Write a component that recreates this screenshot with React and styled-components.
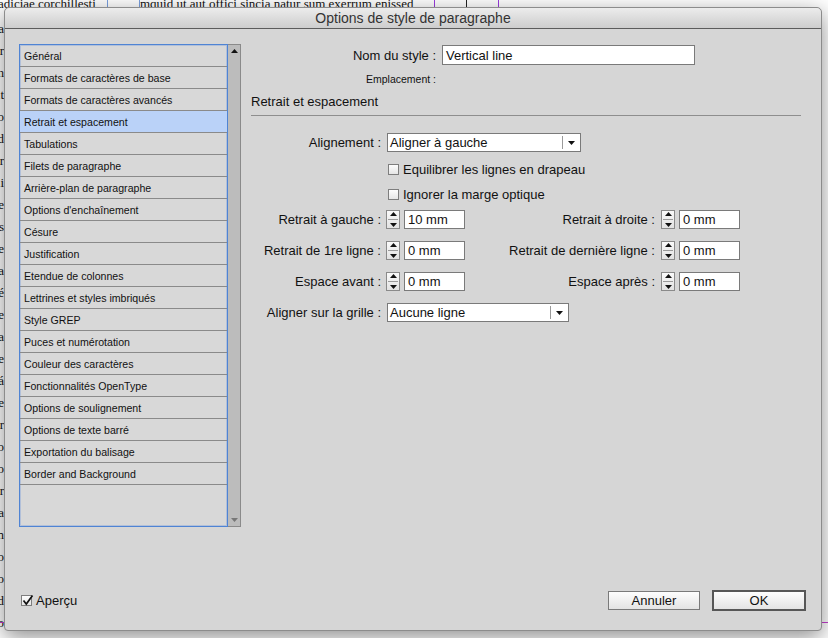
import React from 'react';
import styled, { createGlobalStyle } from 'styled-components';

const Global = createGlobalStyle`
    body {
        margin: 0;
        background: #fff;
    }
`;

const Desktop = styled.div`
    position: relative;
    width: 828px;
    height: 638px;
    overflow: hidden;
    background: #fff;
    font-family: "Liberation Serif", serif;
`;

const DocLine = styled.div`
    position: absolute;
    top: ${p => p.top}px;
    left: ${p => p.left}px;
    font-size: 13px;
    line-height: 14px;
    color: #111;
    white-space: nowrap;
`;

const DocColumn = styled.div`
    position: absolute;
    top: 18px;
    left: -38px;
    width: 42px;
    font-size: 13px;
    line-height: 22px;
    color: #111;
    text-align: right;
`;

const Guide = styled.div`
    position: absolute;
    left: ${p => p.x}px;
    top: 0;
    width: 1px;
    height: 14px;
    background: ${p => p.color};
`;

const HGuide = styled.div`
    position: absolute;
    left: 0;
    right: 0;
    top: 622px;
    height: 1px;
    background: #c43ccf;
`;

const Dialog = styled.div`
    position: absolute;
    left: 4px;
    top: 7px;
    width: 816px;
    height: 622px;
    display: flex;
    flex-direction: column;
    background: #d6d6d6;
    border: 1px solid #8c8c8c;
    border-radius: 5px 5px 4px 4px;
    box-shadow: 0 6px 22px rgba(0, 0, 0, 0.45);
    font-family: "Liberation Sans", Arial, sans-serif;
    color: #111;
`;

const TitleBar = styled.div`
    height: 20px;
    display: flex;
    align-items: center;
    justify-content: center;
    background: linear-gradient(#ececec, #cdcdcd);
    border-bottom: 1px solid #5c5c5c;
    border-radius: 5px 5px 0 0;
    font-size: 14px;
    color: #333;
`;

const Body = styled.div`
    flex: 1;
    display: flex;
    gap: 10px;
    padding: 15px 20px 0 14px;
`;

const ListBox = styled.div`
    width: 222px;
    height: 483px;
    display: flex;
    box-sizing: border-box;
`;

const Items = styled.div`
    flex: 1;
    border: 1px solid #4f84d4;
    box-shadow: inset 0 0 0 1px rgba(110, 150, 220, 0.35);
    background: #d8d8d8;
`;

const Item = styled.div`
    height: 21px;
    border-bottom: 1px solid #8a8a8a;
    padding-left: 4px;
    display: flex;
    align-items: center;
    font-size: 10.6px;
    background: ${p => (p.selected ? '#bad2f8' : 'transparent')};
`;

const Scrollbar = styled.div`
    width: 12px;
    background: #bcbcbc;
    border: 1px solid #8a8a8a;
    border-left: none;
    display: flex;
    flex-direction: column;
    justify-content: space-between;
    align-items: center;
    padding: 4px 0;
`;

const Panel = styled.div`
    flex: 1;
    display: flex;
    flex-direction: column;
`;

const Row = styled.div`
    display: flex;
    align-items: center;
    height: ${p => p.h || 19}px;
    margin-top: ${p => p.mt || 0}px;
    padding-left: ${p => p.pl || 0}px;
`;

const Label = styled.div`
    width: ${p => p.w}px;
    margin-right: ${p => (p.mr === undefined ? 6 : p.mr)}px;
    text-align: right;
    font-size: ${p => p.size || 13}px;
    white-space: nowrap;
`;

const TextInput = styled.div`
    width: ${p => p.w}px;
    height: ${p => p.h || 19}px;
    box-sizing: border-box;
    background: #fff;
    border: 1px solid #7a7a7a;
    padding-left: 3px;
    display: flex;
    align-items: center;
    font-size: 13px;
`;

const Select = styled.div`
    width: ${p => p.w}px;
    height: 19px;
    box-sizing: border-box;
    background: #fff;
    border: 1px solid #7a7a7a;
    display: flex;
    align-items: stretch;
    font-size: 13px;
`;

const SelectText = styled.div`
    flex: 1;
    padding-left: 2px;
    display: flex;
    align-items: center;
`;

const SelectArrow = styled.div`
    width: 17px;
    border-left: 1px solid #9a9a9a;
    margin: 2px 0;
    display: flex;
    align-items: center;
    justify-content: center;
`;

const SectionTitle = styled.div`
    height: 14px;
    margin-top: 9px;
    font-size: 13px;
    display: flex;
    align-items: center;
`;

const Rule = styled.div`
    height: 1px;
    margin-top: 7px;
    background: #8e8e8e;
`;

const Box = styled.div`
    width: 11px;
    height: 11px;
    box-sizing: border-box;
    border: 1px solid #7e7e7e;
    background: linear-gradient(#fdfdfd, #e6e6e6);
    margin-right: 4px;
    display: flex;
    align-items: center;
    justify-content: center;
    position: relative;
`;

const CheckText = styled.div`
    font-size: 13px;
`;

const Spin = styled.div`
    width: 14px;
    height: 19px;
    box-sizing: border-box;
    border: 1px solid #8a8a8a;
    background: linear-gradient(#fafafa, #e2e2e2);
    margin-right: 4px;
    display: flex;
    flex-direction: column;
    align-items: center;
    justify-content: space-around;
`;

const SpinLine = styled.div`
    width: 10px;
    height: 1px;
    background: #9a9a9a;
`;

const Footer = styled.div`
    height: 21px;
    margin: 0 15px 19px 16px;
    display: flex;
    align-items: center;
`;

const Buttons = styled.div`
    margin-left: auto;
    display: flex;
    align-items: center;
    gap: 12px;
`;

const Button = styled.div`
    width: ${p => (p.primary ? 94 : 92)}px;
    height: ${p => (p.primary ? 21 : 19)}px;
    box-sizing: border-box;
    border: ${p => (p.primary ? '2px solid #575757' : '1px solid #7a7a7a')};
    background: linear-gradient(#fdfdfd, #e4e4e4);
    display: flex;
    align-items: center;
    justify-content: center;
    font-size: 13px;
`;

const Tri = ({ down, color = '#111' }) => (
    <svg width="7" height="4" viewBox="0 0 7 4">
        <polygon points={down ? '0,0 7,0 3.5,4' : '0,4 7,4 3.5,0'} fill={color} />
    </svg>
);

const Spinner = () => (
    <Spin>
        <Tri />
        <SpinLine />
        <Tri down />
    </Spin>
);

const Check = ({ checked }) => (
    <Box>
        {checked && (
            <svg width="12" height="12" viewBox="0 0 12 12" style={{ position: 'absolute', left: 0, top: -2 }}>
                <path d="M1.5 6.5 L4.3 10 L10.5 1.5" stroke="#111" strokeWidth="1.7" fill="none" />
            </svg>
        )}
    </Box>
);

const sections = [
    'Général',
    'Formats de caractères de base',
    'Formats de caractères avancés',
    'Retrait et espacement',
    'Tabulations',
    'Filets de paragraphe',
    'Arrière-plan de paragraphe',
    "Options d'enchaînement",
    'Césure',
    'Justification',
    'Etendue de colonnes',
    'Lettrines et styles imbriqués',
    'Style GREP',
    'Puces et numérotation',
    'Couleur des caractères',
    'Fonctionnalités OpenType',
    'Options de soulignement',
    'Options de texte barré',
    'Exportation du balisage',
    'Border and Background',
];

const leftWords = ['ca', 'tur', 'num', 'olit', 'ato', 'aed', 'cor', 'mi', 'tae', 'es', 'de', 'ta', 'ré', 'fue', 'rua', 'ile', 'elá', 'lse', 'ir', 'ao', 'to', 'ar', 'ta', 'an', 'no', 'io', 'ud', 'io', 'ex', 'on', 'od', 'ur', 'ec'];

const Field = ({ label, value, w, mr }) => (
    <>
        <Label w={w} mr={mr}>{label}</Label>
        <Spinner />
        <TextInput w={61}>{value}</TextInput>
    </>
);

export default function App() {
    return (
        <Desktop>
            <Global />
            <DocLine top={-3} left={-2}>adiciae corchillesti</DocLine>
            <DocLine top={-3} left={140}>mquid ut aut offici sincia natur sum exerrum enissed</DocLine>
            <Guide x={107} color="#7aa0e0" />
            <Guide x={139} color="#7aa0e0" />
            <Guide x={434} color="#9a3ce0" />
            <Guide x={466} color="#222" />
            <Guide x={498} color="#9a3ce0" />
            <DocColumn>
                {leftWords.map((w, i) => <div key={i}>{w}</div>)}
            </DocColumn>
            <HGuide />

            <Dialog>
                <TitleBar>Options de style de paragraphe</TitleBar>
                <Body>
                    <ListBox>
                        <Items>
                            {sections.map((s, i) => (
                                <Item key={s} selected={i === 3}>{s}</Item>
                            ))}
                        </Items>
                        <Scrollbar>
                            <Tri />
                            <Tri down color="#777" />
                        </Scrollbar>
                    </ListBox>

                    <Panel>
                        <Row h={20} mt={1}>
                            <Label w={185}>Nom du style :</Label>
                            <TextInput w={253} h={20}>Vertical line</TextInput>
                        </Row>
                        <Row h={12} mt={8}>
                            <Label w={185} size={10.5}>Emplacement :</Label>
                        </Row>
                        <SectionTitle>Retrait et espacement</SectionTitle>
                        <Rule />

                        <Row mt={17}>
                            <Label w={130}>Alignement :</Label>
                            <Select w={194}>
                                <SelectText>Aligner à gauche</SelectText>
                                <SelectArrow><Tri down /></SelectArrow>
                            </Select>
                        </Row>
                        <Row h={16} mt={9} pl={137}>
                            <Check />
                            <CheckText>Equilibrer les lignes en drapeau</CheckText>
                        </Row>
                        <Row h={16} mt={9} pl={137}>
                            <Check />
                            <CheckText>Ignorer la marge optique</CheckText>
                        </Row>

                        <Row mt={8}>
                            <Field label="Retrait à gauche :" value="10 mm" w={130} mr={5} />
                            <Field label="Retrait à droite :" value="0 mm" w={190} mr={6} />
                        </Row>
                        <Row mt={12}>
                            <Field label="Retrait de 1re ligne :" value="0 mm" w={130} mr={5} />
                            <Field label="Retrait de dernière ligne :" value="0 mm" w={190} mr={6} />
                        </Row>
                        <Row mt={12}>
                            <Field label="Espace avant :" value="0 mm" w={130} mr={5} />
                            <Field label="Espace après :" value="0 mm" w={190} mr={6} />
                        </Row>
                        <Row mt={12}>
                            <Label w={130}>Aligner sur la grille :</Label>
                            <Select w={182}>
                                <SelectText>Aucune ligne</SelectText>
                                <SelectArrow><Tri down /></SelectArrow>
                            </Select>
                        </Row>
                    </Panel>
                </Body>

                <Footer>
                    <Check checked />
                    <CheckText>Aperçu</CheckText>
                    <Buttons>
                        <Button>Annuler</Button>
                        <Button primary>OK</Button>
                    </Buttons>
                </Footer>
            </Dialog>
        </Desktop>
    );
}
